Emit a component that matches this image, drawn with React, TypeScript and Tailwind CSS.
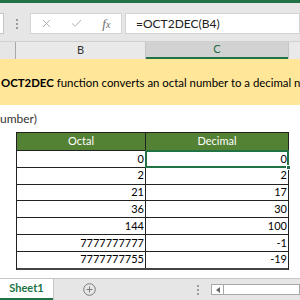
import { Check, X } from "lucide-react";

const rows: Array<[string, string]> = [
  ["0", "0"],
  ["2", "2"],
  ["21", "17"],
  ["36", "30"],
  ["144", "100"],
  ["7777777777", "-1"],
  ["7777777755", "-19"],
];

const font = { fontFamily: "Lato, 'Open Sans', 'Liberation Sans', sans-serif" };

export default function App() {
  return (
    <div className="w-[300px] h-[300px] overflow-hidden bg-white flex flex-col text-black" style={font}>
      {/* title strip */}
      <div className="h-[3px] bg-[#217346] shrink-0" />

      {/* formula bar */}
      <div className="h-[38px] bg-[#e6e6e6] flex items-start pt-[10px] shrink-0">
        <div className="w-[4px] h-[21px] bg-white border-y border-r border-[#c6c6c6]" />
        <div className="w-[26px] h-[21px] flex flex-col items-center justify-center gap-[2px]">
          <span className="w-[2px] h-[2px] bg-[#9a9a9a]" />
          <span className="w-[2px] h-[2px] bg-[#9a9a9a]" />
          <span className="w-[2px] h-[2px] bg-[#9a9a9a]" />
        </div>
        <div className="w-[92px] h-[21px] bg-white border border-[#d4d4d4] flex items-center">
          <div className="w-[31px] flex justify-center">
            <X size={13} strokeWidth={1.6} color="#a6a6a6" />
          </div>
          <div className="w-[31px] flex justify-center">
            <Check size={13} strokeWidth={1.6} color="#a6a6a6" />
          </div>
          <div className="w-[30px] flex justify-center">
            <span className="text-[13px] italic text-[#6b6b6b]" style={{ fontFamily: "'Liberation Serif', serif" }}>
              f<span className="text-[10px]">x</span>
            </span>
          </div>
        </div>
        <div className="ml-[3px] flex-1 h-[21px] bg-white border border-[#d4d4d4] flex items-center pl-[10px]">
          <span className="text-[12px] text-[#222]">=OCT2DEC(B4)</span>
        </div>
      </div>

      {/* column headers */}
      <div className="h-[18px] flex bg-[#e6e6e6] shrink-0 border-t border-[#d0d0d0]">
        <div className="w-[16px] border-r border-[#a8a8a8]" />
        <div className="w-[130px] bg-[#e9e9e9] border-r border-[#c4c4c4] flex items-center justify-center text-[11px] text-[#333]">
          B
        </div>
        <div className="w-[142px] bg-[#d2d2d2] border-b-2 border-[#217346] flex items-center justify-center text-[11px] text-[#1e6b40]">
          C
        </div>
        <div className="flex-1 bg-[#e9e9e9] border-l border-[#c4c4c4]" />
      </div>

      {/* description row */}
      <div className="h-[46px] bg-[#ffe699] flex items-center shrink-0 overflow-hidden whitespace-nowrap">
        <span className="text-[11.4px] pl-[1px] pt-[2px]">
          <b>OCT2DEC</b> function converts an octal number to a decimal nu
        </span>
      </div>

      <div className="h-[27px] flex items-center shrink-0">
        <span className="text-[12px] text-[#333]">umber)</span>
      </div>

      {/* table */}
      <div className="ml-[16px] w-[273px] border-x border-t border-[#222] shrink-0">
        <div className="h-[17px] flex bg-[#548235] text-white text-[11px]">
          <div className="w-[129px] border-r border-[#222] flex items-center justify-center">Octal</div>
          <div className="flex-1 flex items-center justify-center">Decimal</div>
        </div>
        {rows.map(([oct, dec], i) => (
          <div key={oct} className="h-[16.8px] flex border-t border-[#222] text-[11px]">
            <div className="w-[129px] border-r border-[#222] flex items-center justify-end pr-[1px]">{oct}</div>
            <div
              className={`flex-1 flex items-center justify-end pr-[1px] relative ${
                i === 0 ? "outline-2 outline-[#217346] -outline-offset-1" : ""
              }`}
            >
              {dec}
              {i === 0 && (
                <span className="absolute right-[-3px] bottom-[-3px] w-[5px] h-[5px] bg-[#217346] border border-white" />
              )}
            </div>
          </div>
        ))}
        <div className="border-t-2 border-[#444]" />
      </div>

      <div className="flex-1" />

      {/* sheet tabs */}
      <div className="h-[22px] bg-[#e6e6e6] border-t border-[#c6c6c6] flex items-stretch shrink-0">
        <div className="w-[53px] bg-white border-b-2 border-[#217346] flex items-center justify-center">
          <span className="text-[11px] font-bold text-[#217346]">Sheet1</span>
        </div>
        <div className="w-[1px] bg-[#c6c6c6]" />
        <div className="w-[70px] flex items-center justify-center">
          <svg width="13" height="13" viewBox="0 0 13 13">
            <circle cx="6.5" cy="6.5" r="5.8" fill="none" stroke="#7a7a7a" strokeWidth="1" />
            <path d="M6.5 3.5v6M3.5 6.5h6" stroke="#7a7a7a" strokeWidth="1" />
          </svg>
        </div>
        <div className="w-[75px] flex flex-col items-end justify-center gap-[2px]">
          <span className="w-[2px] h-[2px] bg-[#9a9a9a]" />
          <span className="w-[2px] h-[2px] bg-[#9a9a9a]" />
          <span className="w-[2px] h-[2px] bg-[#9a9a9a]" />
        </div>
        <div className="ml-[12px] flex-1 my-[5px] bg-white border border-[#a8a8a8] flex">
          <div className="w-[12px] border-r border-[#a8a8a8] flex items-center justify-center">
            <svg width="4" height="6" viewBox="0 0 4 6">
              <path d="M4 0L0 3l4 3z" fill="#666" />
            </svg>
          </div>
        </div>
      </div>
    </div>
  );
}
